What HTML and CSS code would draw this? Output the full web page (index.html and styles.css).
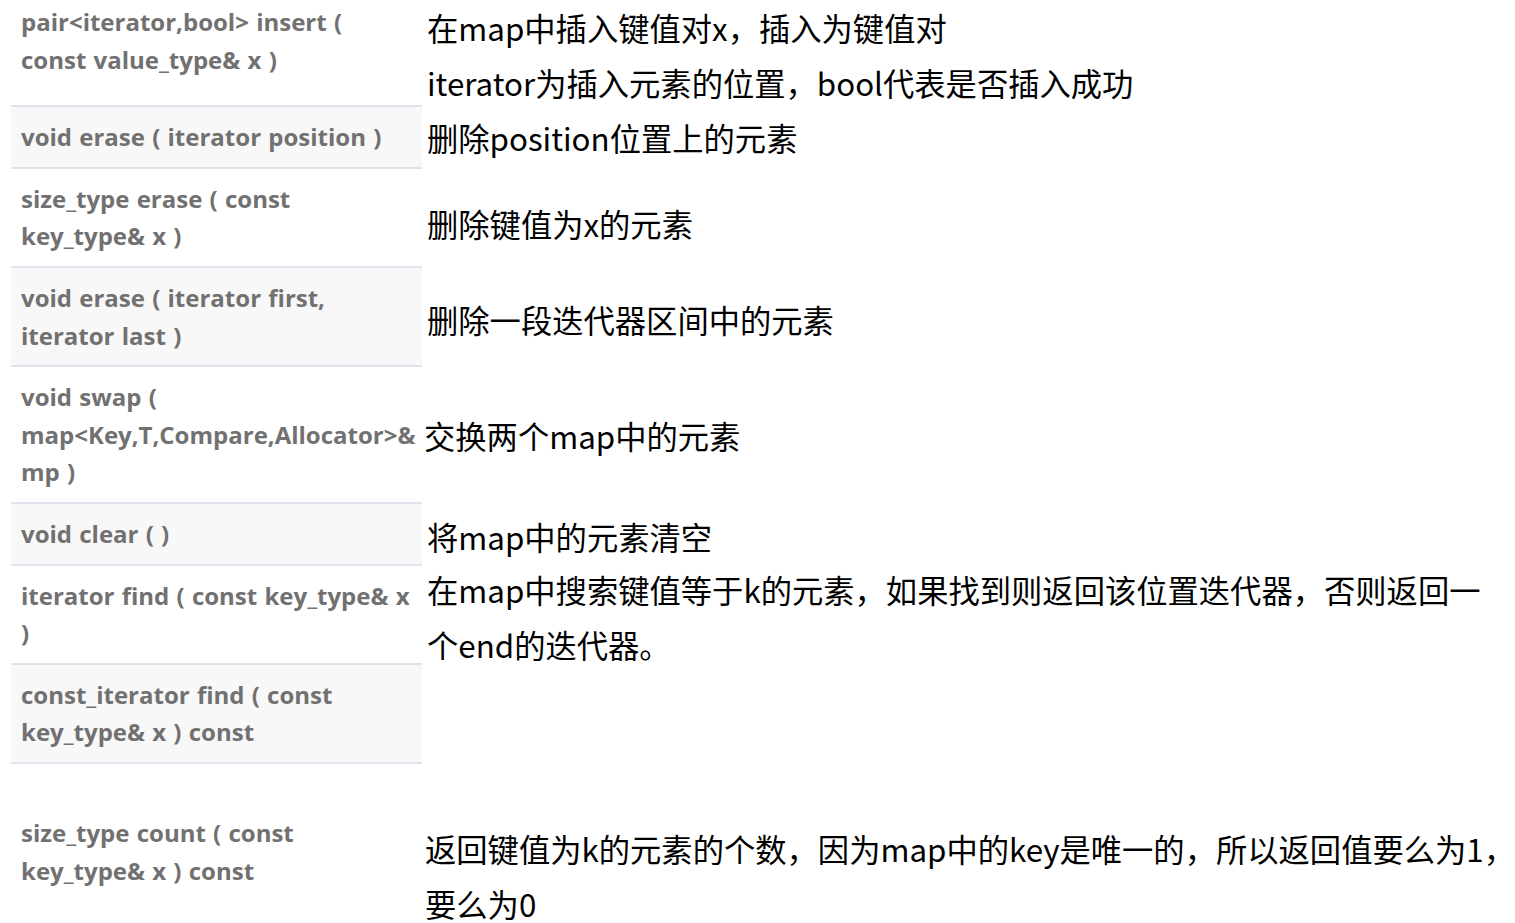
FILE: index.html
```html
<!DOCTYPE html>
<html lang="zh-CN">
<head>
<meta charset="utf-8">
<title>map 成员函数</title>
<link rel="stylesheet" href="styles.css">
</head>
<body>
<div class="table">
  <div class="row row-first">
    <div class="key key-first">pair&lt;iterator,bool&gt; insert (<br>const value_type&amp; x )</div>
    <div class="desc desc-first"><p>在map中插入键值对x，插入为键值对<br>iterator为插入元素的位置，bool代表是否插入成功</p></div>
  </div>
  <div class="row alt">
    <div class="key">void erase ( iterator position )</div>
    <div class="desc desc-up"><p>删除position位置上的元素</p></div>
  </div>
  <div class="row">
    <div class="key">size_type erase ( const<br>key_type&amp; x )</div>
    <div class="desc desc-low"><p>删除键值为x的元素</p></div>
  </div>
  <div class="row alt">
    <div class="key">void erase ( iterator first,<br>iterator last )</div>
    <div class="desc"><p>删除一段迭代器区间中的元素</p></div>
  </div>
  <div class="row">
    <div class="key">void swap (<br>map&lt;Key,T,Compare,Allocator&gt;&amp;<br>mp )</div>
    <div class="desc desc-tight desc-up"><p>交换两个map中的元素</p></div>
  </div>
  <div class="row alt">
    <div class="key">void clear ( )</div>
    <div class="desc"><p>将map中的元素清空</p></div>
  </div>
  <div class="row">
    <div class="key">iterator find ( const key_type&amp; x<br>)</div>
    <div class="desc"><p>在map中搜索键值等于k的元素，如果找到则返回该位置迭代器，否则返回一<br>个end的迭代器。</p></div>
  </div>
  <div class="row alt">
    <div class="key">const_iterator find ( const<br>key_type&amp; x ) const</div>
    <div class="desc"></div>
  </div>
  <div class="row row-last">
    <div class="key key-last">size_type count ( const<br>key_type&amp; x ) const</div>
    <div class="desc desc-last"><p>返回键值为k的元素的个数，因为map中的key是唯一的，所以返回值要么为1，<br>要么为0</p></div>
  </div>
</div>
</body>
</html>
```

FILE: styles.css
```css
html, body {
  margin: 0;
  padding: 0;
  background: #ffffff;
}

.table {
  display: flex;
  flex-direction: column;
  padding-left: 11px;
}

.row {
  display: flex;
  align-items: stretch;
}

.key {
  width: 411px;
  box-sizing: border-box;
  flex: none;
  padding: 11px 10px 11px 10px;
  border-bottom: 2px solid #dfe4ec;
  font-family: "Open Sans", "Noto Sans", sans-serif;
  font-weight: 700;
  font-size: 24px;
  line-height: 37.6px;
  word-spacing: 1px;
  color: #717171;
  white-space: nowrap;
}

.row.alt .key {
  background: #f8f8f8;
}

.key-first {
  padding-top: 3px;
  padding-bottom: 27px;
}

.key-last {
  border-bottom: none;
  padding-top: 50px;
  padding-bottom: 0;
}

.desc {
  flex: 1;
  align-self: center;
  height: 0;
  margin-top: 4px;
  display: flex;
  align-items: center;
  padding-left: 5px;
}

.desc p {
  margin: 0;
  font-family: "Noto Sans CJK SC", "Noto Sans", sans-serif;
  font-size: 31.3px;
  line-height: 55px;
  color: #000000;
  white-space: nowrap;
}

.desc-up {
  margin-top: 0;
}

.desc-low {
  margin-top: 10px;
}

.desc-tight {
  padding-left: 2px;
}

.desc-first {
  margin-top: 3px;
}

.desc-last {
  align-self: flex-start;
  height: auto;
  margin-top: 57px;
  padding-left: 3px;
}
```
